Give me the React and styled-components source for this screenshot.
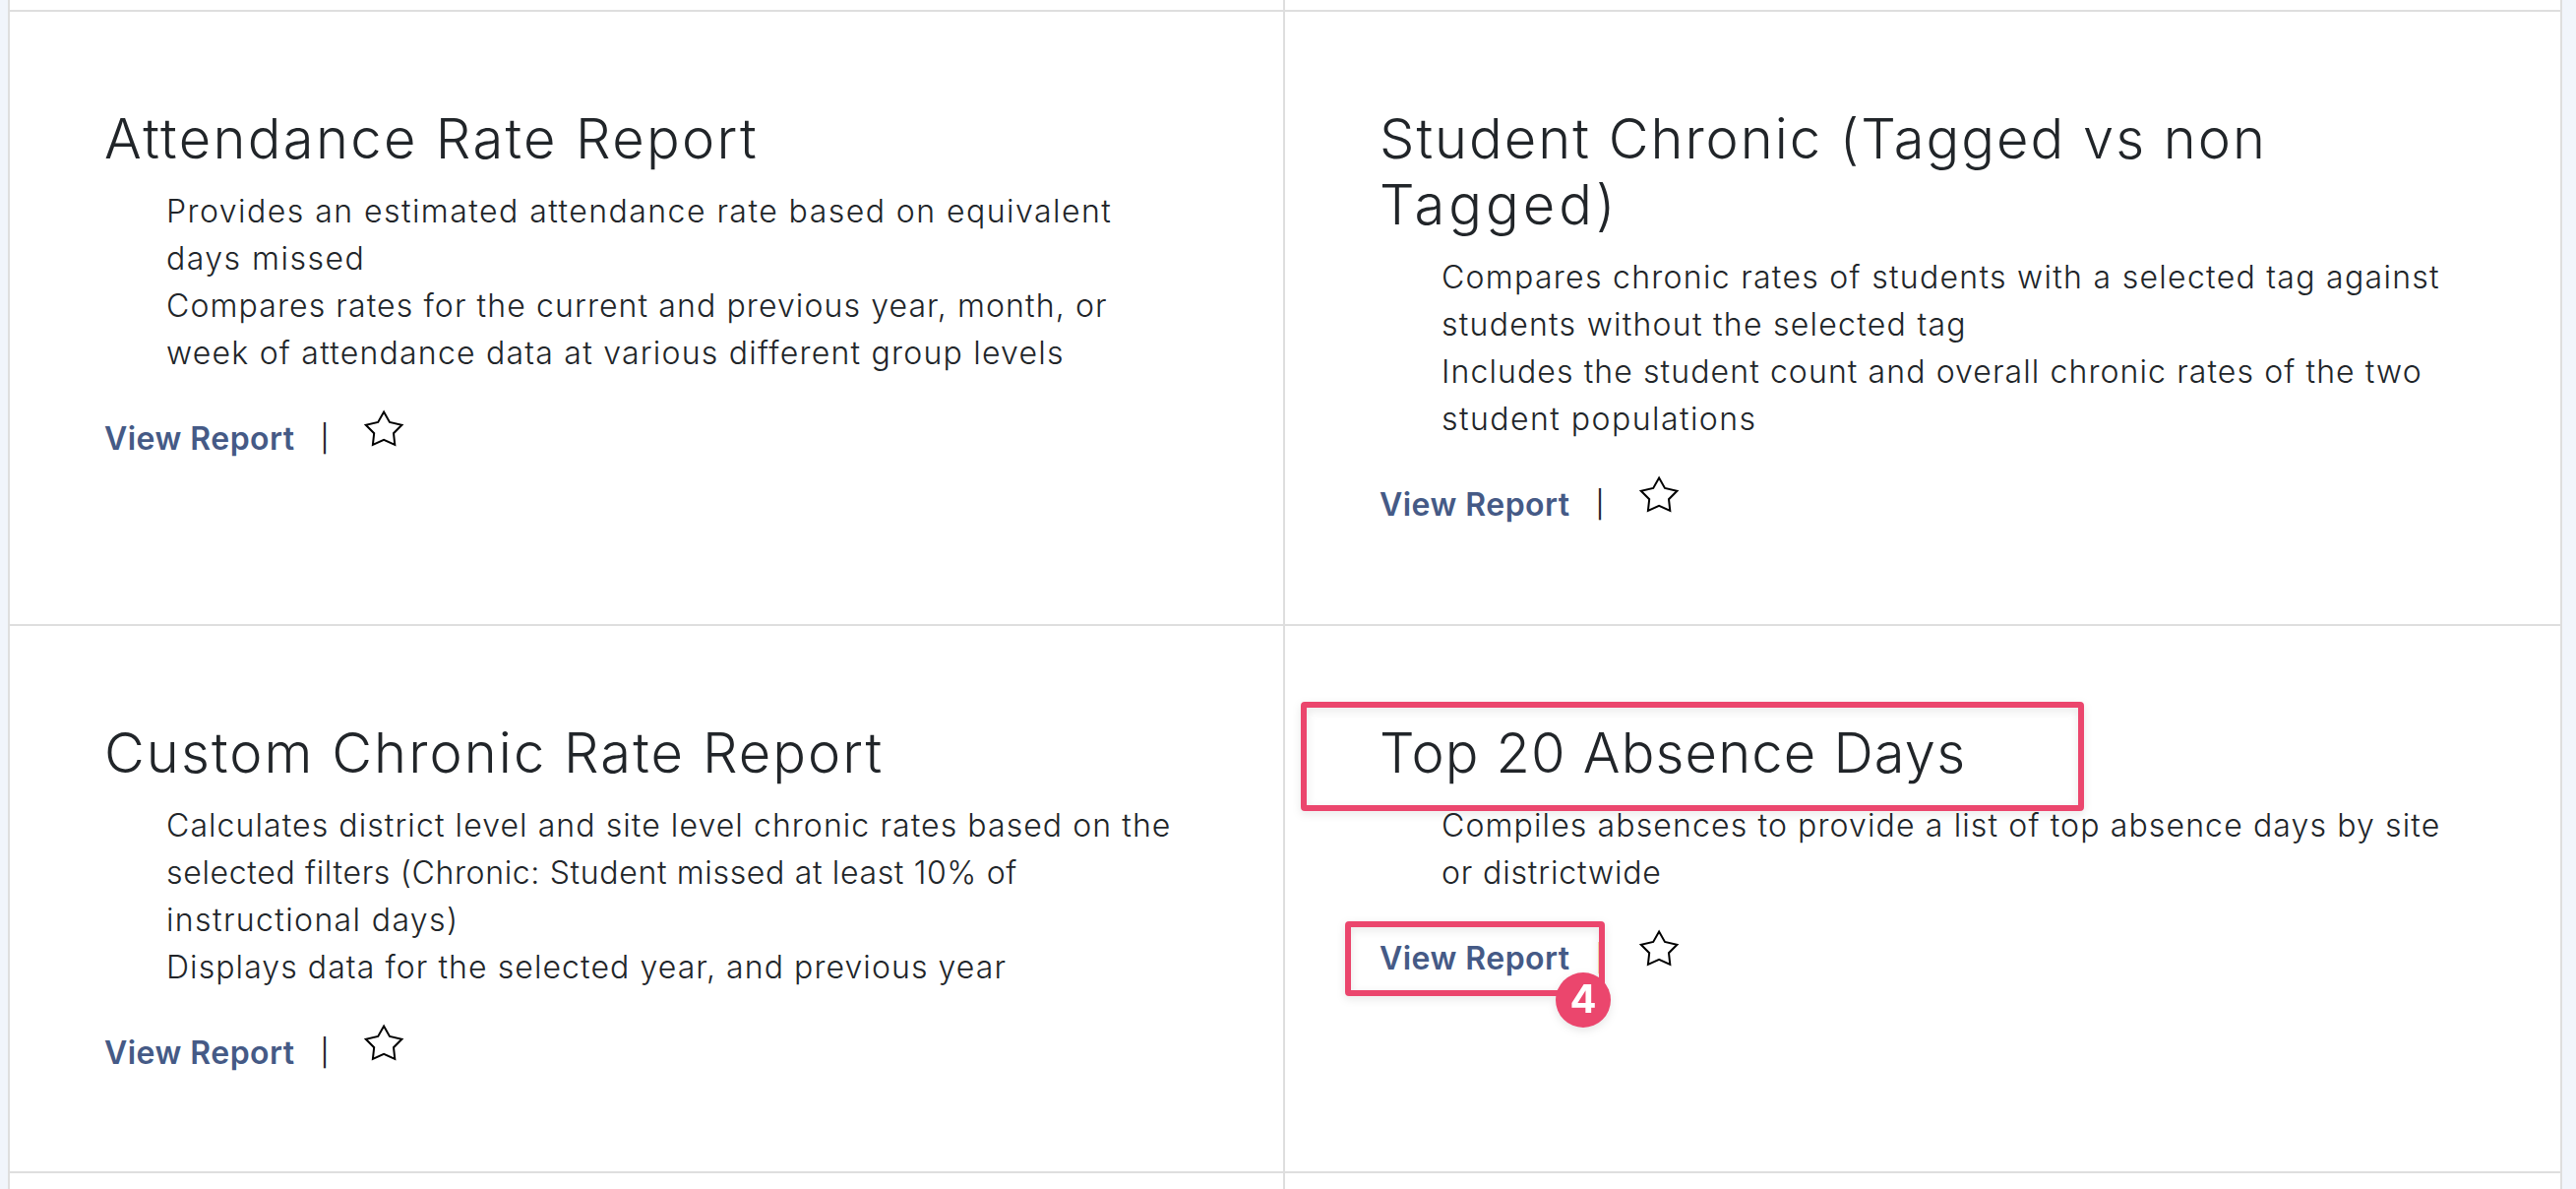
import React from 'react'
import styled, { createGlobalStyle } from 'styled-components'

const colors = {
	page: '#f1f5fb',
	card: '#fff',
	border: '#dedede',
	text: '#212529',
	link: '#455a86',
	accent: '#eb466d',
}

// each line is [text, letter spacing]
const reports = [
	{
		title: [['Attendance Rate Report', 2.36]],
		items: [
			[
				['Provides an estimated attendance rate based on equivalent', 1.46],
				['days missed', 1.48],
			],
			[
				['Compares rates for the current and previous year, month, or', 1.11],
				['week of attendance data at various different group levels', 1.23],
			],
		],
	},
	{
		title: [
			['Student Chronic (Tagged vs non', 2.0],
			['Tagged)', 4.0],
		],
		items: [
			[
				['Compares chronic rates of students with a selected tag against', 1.29],
				['students without the selected tag', 1.26],
			],
			[
				['Includes the student count and overall chronic rates of the two', 1.1],
				['student populations', 1.46],
			],
		],
	},
	{
		title: [['Custom Chronic Rate Report', 2.08]],
		items: [
			[
				['Calculates district level and site level chronic rates based on the', 1.08],
				['selected filters (Chronic: Student missed at least 10% of', 0.66],
				['instructional days)', 1.38],
			],
			[['Displays data for the selected year, and previous year', 1.08]],
		],
	},
	{
		title: [['Top 20 Absence Days', 1.17]],
		items: [
			[
				['Compiles absences to provide a list of top absence days by site', 1.13],
				['or districtwide', 0.85],
			],
		],
		step: 4,
	},
]

const Lines = ({ lines }) =>
	lines.map(([text, tracking]) => (
		<Line key={text} $tracking={tracking}>
			{text}
		</Line>
	))

const Star = () => (
	<svg width='42' height='40' viewBox='0 0 42 40' fill='none' stroke='#000' strokeWidth='2'>
		<path d='M21.1 3.6 27 13.9 39.4 16.8 31 25.2 32.3 36.8 21.1 31.9 9.9 36.8 11.2 25.2 2.8 16.8 15.2 13.9Z' />
	</svg>
)

const ReportCard = ({ title, items, step }) => (
	<StyledCard>
		<StyledTitle>
			<Lines lines={title} />
			{step && <TitleHighlight />}
		</StyledTitle>
		<StyledList>
			{items.map(lines => (
				<li key={lines[0][0]}>
					<Lines lines={lines} />
				</li>
			))}
		</StyledList>
		<StyledActions>
			<StyledLink href='#'>View Report</StyledLink>
			<Divider>|</Divider>
			<StarButton aria-label='Favorite'>
				<Star />
			</StarButton>
			{step && (
				<LinkHighlight>
					<Badge>{step}</Badge>
				</LinkHighlight>
			)}
		</StyledActions>
	</StyledCard>
)

const App = () => (
	<StyledPage>
		<GlobalStyles />
		<StyledGrid>
			<EmptyCard />
			<EmptyCard />
			{reports.map(report => (
				<ReportCard key={report.title[0][0]} {...report} />
			))}
			<EmptyCard />
			<EmptyCard />
		</StyledGrid>
	</StyledPage>
)

const GlobalStyles = createGlobalStyle`
	* {
		box-sizing: border-box;
	}

	body {
		margin: 0;
		background: ${colors.page};
		color: ${colors.text};
		font-family: Inter, 'Open Sans', sans-serif;
		font-weight: 300;
		font-size: 32px;
		line-height: 48px;
	}
`

const StyledPage = styled.div`
	height: 1208px;
	padding: 0 14px 0 8px;
	overflow: hidden;
`

const StyledGrid = styled.div`
	display: grid;
	grid-template-columns: 1294px 1296px;
	grid-template-rows: 10px 622px 554px 16px;
	gap: 2px;
	padding: 0 2px;
	background: ${colors.border};
`

const EmptyCard = styled.div`
	background: ${colors.card};
`

const StyledCard = styled.section`
	padding: 96px 96px 0;
	background: ${colors.card};
`

const StyledTitle = styled.h2`
	position: relative;
	margin: 0 0 16px;
	font-size: 56px;
	font-weight: 300;
	line-height: 67.2px;
`

const StyledList = styled.ul`
	margin: 0 0 32px;
	padding: 0 0 0 63px;
	list-style: none;
`

const Line = styled.span`
	display: block;
	white-space: nowrap;
	letter-spacing: ${({ $tracking }) => $tracking}px;
`

const StyledActions = styled.div`
	position: relative;
	display: flex;
	align-items: flex-start;
`

const StyledLink = styled.a`
	width: 193px;
	margin-top: 7px;
	color: ${colors.link};
	font-weight: 600;
	letter-spacing: 0.46px;
	text-decoration: none;
	white-space: nowrap;
`

const Divider = styled.span`
	width: 70px;
	margin-top: 7px;
	padding-right: 8px;
	font-size: 27px;
	font-weight: 400;
	text-align: center;
`

const StarButton = styled.button`
	display: flex;
	padding: 0;
	border: none;
	background: none;
`

const Highlight = styled.div`
	position: absolute;
	border: 6px solid ${colors.accent};
	border-radius: 4px;
	filter: drop-shadow(0 3px 4px rgba(0, 0, 0, 0.1));
`

const TitleHighlight = styled(Highlight)`
	top: -19px;
	left: -80px;
	width: 796px;
	height: 111px;
`

const LinkHighlight = styled(Highlight)`
	top: -7px;
	left: -35px;
	width: 264px;
	height: 76px;
`

const Badge = styled.span`
	position: absolute;
	right: -12px;
	bottom: -38px;
	width: 56px;
	height: 56px;
	border-radius: 50%;
	background: ${colors.accent};
	color: #fff;
	font-size: 40px;
	font-weight: 700;
	line-height: 54px;
	text-align: center;
`

export default App
